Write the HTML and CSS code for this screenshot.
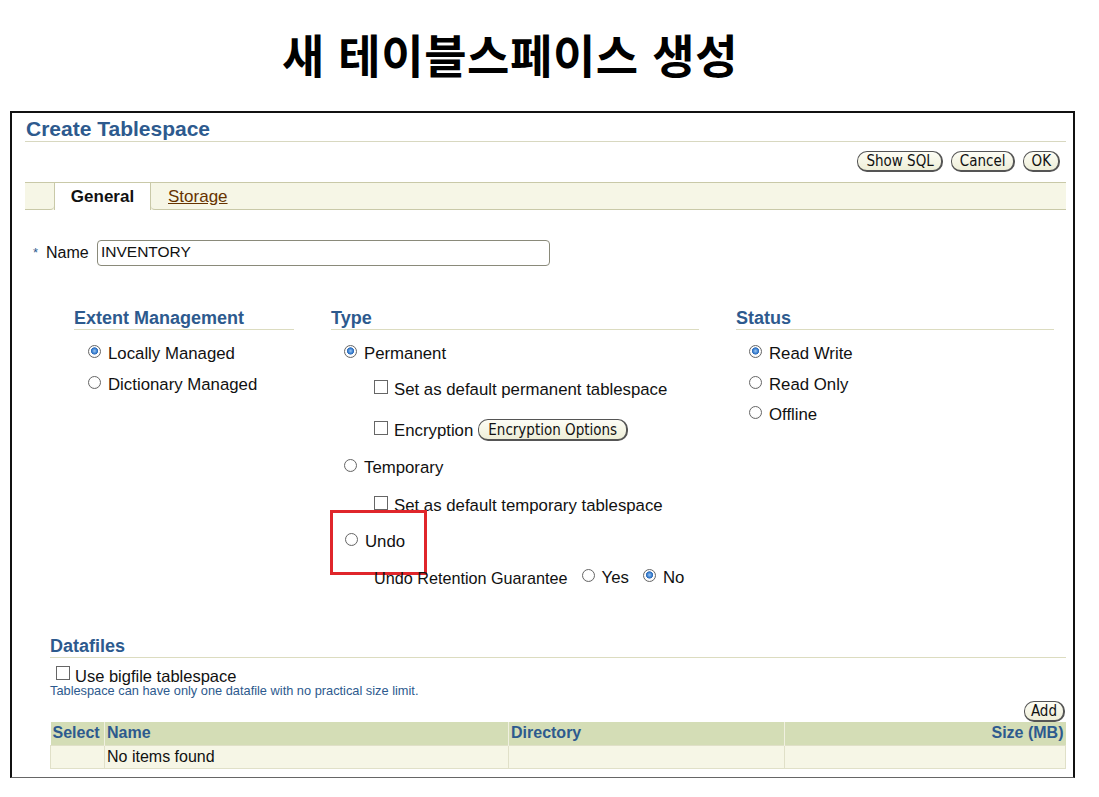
FILE: index.html
```html
<!DOCTYPE html>
<html lang="ko">
<head>
<meta charset="utf-8">
<title>새 테이블스페이스 생성</title>
<link rel="stylesheet" href="styles.css">
</head>
<body>
<h1 class="slide-title">새 테이블스페이스 생성</h1>
<div class="frame">
  <div class="page-title">Create Tablespace</div>
  <div class="actions">
    <span class="btn">Show SQL</span>
    <span class="btn">Cancel</span>
    <span class="btn">OK</span>
  </div>
  <div class="tabs">
    <div class="tab-spacer"></div>
    <div class="tab active">General</div>
    <div class="tab link"><span>Storage</span></div>
    <div class="tab-fill"></div>
  </div>
  <div class="name-row">
    <span class="req">*</span>
    <span class="label">Name</span>
    <div class="input">INVENTORY</div>
  </div>
  <div class="sections">
    <div class="section">
      <div class="sec-head">Extent Management</div>
      <div class="opt r1"><span class="radio on"></span>Locally Managed</div>
      <div class="opt r2"><span class="radio"></span>Dictionary Managed</div>
    </div>
    <div class="section type">
      <div class="sec-head">Type</div>
      <div class="opt r1"><span class="radio on"></span>Permanent</div>
      <div class="opt sub t2"><span class="check"></span>Set as default permanent tablespace</div>
      <div class="opt sub t3"><span class="check"></span>Encryption<span class="btn enc">Encryption Options</span></div>
      <div class="opt t4"><span class="radio"></span>Temporary</div>
      <div class="opt sub t5"><span class="check"></span>Set as default temporary tablespace</div>
      <div class="opt t6"><span class="radio"></span>Undo<span class="highlight"></span></div>
      <div class="opt sub t7"><span class="urg">Undo Retention Guarantee</span><span class="radio yes"></span>Yes<span class="radio on no"></span>No</div>
    </div>
    <div class="section">
      <div class="sec-head">Status</div>
      <div class="opt r1"><span class="radio on"></span>Read Write</div>
      <div class="opt r2"><span class="radio"></span>Read Only</div>
      <div class="opt r3"><span class="radio"></span>Offline</div>
    </div>
  </div>
  <div class="datafiles">
    <div class="sec-head wide">Datafiles</div>
    <div class="opt big"><span class="check"></span>Use bigfile tablespace</div>
    <div class="hint">Tablespace can have only one datafile with no practical size limit.</div>
    <div class="add-row"><span class="btn">Add</span></div>
    <table class="grid">
      <thead>
        <tr><th class="c-sel">Select</th><th class="c-name">Name</th><th class="c-dir">Directory</th><th class="c-size">Size (MB)</th></tr>
      </thead>
      <tbody>
        <tr><td></td><td>No items found</td><td></td><td></td></tr>
      </tbody>
    </table>
  </div>
</div>
</body>
</html>
```

FILE: styles.css
```css
* { box-sizing: border-box; }
body {
  margin: 0;
  background: #ffffff;
  font-family: "Liberation Sans", Arial, sans-serif;
  color: #111;
  width: 1099px;
  height: 797px;
  overflow: hidden;
}
.slide-title {
  margin: 0;
  padding-top: 24px;
  height: 111px;
  text-align: center;
  font-family: "Noto Sans CJK KR", "Noto Sans", sans-serif;
  font-weight: 700;
  font-size: 46px;
  line-height: 58px;
  color: #000;
  padding-right: 79px;
  letter-spacing: 0.6px;
}
.frame {
  margin-left: 10px;
  width: 1065px;
  height: 667px;
  border: 2px solid #111;
  border-bottom: 1px solid #666;
  padding: 0 7px 0 13px;
}
.page-title {
  color: #2d5a8e;
  font-weight: 700;
  font-size: 21px;
  height: 29px;
  line-height: 24px;
  padding-top: 4px;
  padding-left: 1px;
  border-bottom: 1px solid #d8d8c0;
}
.actions {
  display: flex;
  justify-content: flex-end;
  gap: 8px;
  padding: 9px 6px 0 0;
  height: 40px;
}
.btn {
  display: inline-flex;
  align-items: center;
  height: 21px;
  padding: 0 7px 0 8px;
  border: 1px solid #555;
  border-bottom-width: 2px;
  border-right-width: 2px;
  border-radius: 10px;
  background: linear-gradient(#fdfdf5, #eeeed8);
  font-family: "DejaVu Sans Condensed", "DejaVu Sans", sans-serif;
  font-size: 15px;
  color: #111;
}
.tabs {
  display: flex;
  height: 28px;
  background: #f6f6e6;
  border-top: 1px solid #c9c9a8;
}
.tab-spacer {
  width: 29px;
  border-bottom: 1px solid #c9c9a8;
  border-bottom-right-radius: 4px;
}
.tab {
  display: flex;
  align-items: center;
  font-size: 17px;
}
.tab.active {
  width: 97px;
  background: #ffffff;
  font-weight: 700;
  justify-content: center;
  border-left: 1px solid #c9c9a8;
  border-right: 1px solid #c9c9a8;
  padding-top: 1px;
}
.tab.link {
  padding: 1px 0 0 17px;
  width: 100px;
  border-bottom: 1px solid #c9c9a8;
  border-bottom-left-radius: 4px;
}
.tab.link span {
  color: #663300;
  text-decoration: underline;
}
.tab-fill {
  flex: 1;
  border-bottom: 1px solid #c9c9a8;
}
.name-row {
  display: flex;
  align-items: center;
  margin-top: 30px;
  height: 25px;
  font-size: 16px;
}
.req {
  color: #2d5a8e;
  margin-left: 8px;
  width: 13px;
  font-size: 13px;
}
.label { width: 51px; }
.input {
  width: 453px;
  height: 26px;
  border: 1px solid #8a8a7a;
  border-radius: 4px;
  padding: 2px 3px;
  font-size: 15.5px;
}
.sections {
  display: grid;
  grid-template-columns: 220px 368px 318px;
  column-gap: 37px;
  margin-left: 49px;
  margin-top: 43px;
}
.sec-head {
  color: #2d5a8e;
  font-weight: 700;
  font-size: 18px;
  height: 22px;
  line-height: 20px;
  border-bottom: 1px solid #dcdcc0;
}
.opt {
  display: flex;
  align-items: center;
  font-size: 16.8px;
  height: 20px;
  position: relative;
  padding-left: 13px;
  white-space: nowrap;
}
.opt.r1 { margin-top: 14px; }
.opt.r2 { margin-top: 11px; }
.opt.r3 { margin-top: 10px; }
.section:first-child .opt { padding-left: 14px; }
.type .opt.r1 { margin-top: 14px; }
.opt.sub { padding-left: 43px; }
.opt.t2 { margin-top: 16px; }
.opt.t3 { margin-top: 21px; }
.opt.t4 { margin-top: 17px; }
.opt.t5 { margin-top: 18px; }
.opt.t6 { margin-top: 16px; padding-left: 14px; }
.opt.t7 { margin-top: 16px; }
.urg { font-size: 16.2px; }
.radio {
  display: inline-block;
  width: 13px;
  height: 13px;
  border: 1px solid #666;
  border-radius: 50%;
  background: radial-gradient(circle at 50% 40%, #ffffff 55%, #e4e4e4 100%);
  margin-right: 7px;
  position: relative;
  top: -3px;
  flex: none;
}
.radio.on {
  background: radial-gradient(circle at 50% 45%, #9cc6f0 0, #3a7fd0 30%, #2e6bb8 40%, #ffffff 48%, #eeeeee 100%);
}
.radio.yes { margin-left: 15px; margin-right: 6px; }
.radio.no { margin-left: 14px; margin-right: 7px; }
.check {
  display: inline-block;
  width: 14px;
  height: 14px;
  border: 1px solid #666;
  background: #ffffff;
  margin-right: 6px;
  position: relative;
  top: -3px;
  flex: none;
}
.btn.enc {
  margin-left: 5px;
  height: 22px;
  position: relative;
  top: -1px;
  padding: 0 9px;
  font-size: 15px;
}
.highlight {
  position: absolute;
  left: -1px;
  top: -22px;
  width: 97px;
  height: 65px;
  border: 3px solid #e0262b;
}
.datafiles {
  margin-top: 48px;
  padding-left: 25px;
}
.sec-head.wide { height: 22px; line-height: 20px; }
.opt.big {
  padding-left: 6px;
  margin-top: 8px;
  font-size: 16.5px;
}
.opt.big .check { margin-right: 5px; }
.hint {
  color: #2d5a8e;
  font-size: 12.8px;
  height: 14px;
  line-height: 14px;
  margin-top: -2px;
}
.add-row {
  display: flex;
  justify-content: flex-end;
  padding-right: 1px;
  margin-top: 3px;
  height: 21px;
}
.add-row .btn { padding: 0 6px; font-size: 15px; }
.grid {
  width: 1016px;
  border-collapse: collapse;
  font-size: 16px;
}
.grid th {
  background: #d4ddb6;
  color: #2d5a8e;
  font-weight: 700;
  text-align: left;
  height: 23px;
  padding: 0 2px;
  border-left: 1px solid #f0f0e0;
}
.grid th:first-child { border-left: none; }
.grid th.c-size { text-align: right; }
.grid .c-sel { width: 54px; }
.grid .c-name { width: 404px; }
.grid .c-dir { width: 276px; }
.grid td {
  background: #f6f6e6;
  height: 23px;
  padding: 0 2px;
  border: 1px solid #e0e0c8;
}
```
